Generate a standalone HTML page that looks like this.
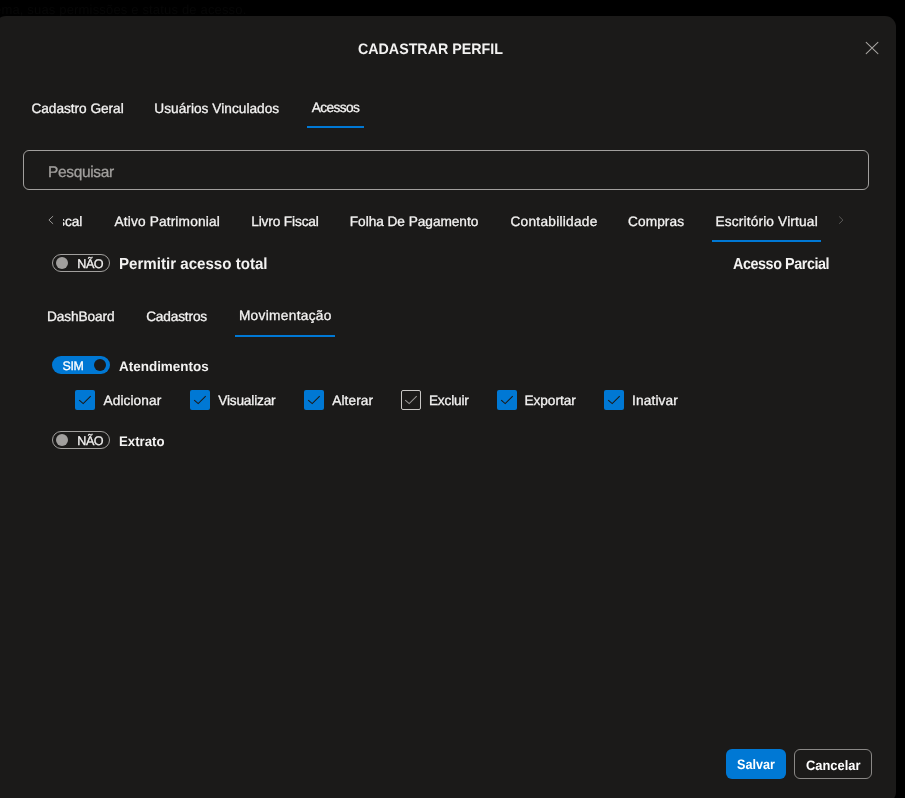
<!DOCTYPE html>
<html lang="pt-BR">
<head>
<meta charset="utf-8">
<title>Cadastrar Perfil</title>
<style>
*{box-sizing:border-box;margin:0;padding:0}
html,body{width:905px;height:798px;overflow:hidden;background:#000}
body{position:relative;font-family:"Liberation Sans",sans-serif;color:#f3f2f1;-webkit-font-smoothing:antialiased;text-rendering:geometricPrecision}
.bgtext{position:absolute;left:-6px;top:0px;font-size:13px;line-height:20px;color:#070707;white-space:nowrap;letter-spacing:0.17px}
.modal{position:absolute;left:-5px;top:16px;width:901px;height:787px;background:#1b1a19;border-radius:11px}
.t{position:absolute;white-space:nowrap;line-height:20px;font-size:13.7px;color:#f3f2f1;-webkit-text-stroke:0.3px currentColor}
.sb{-webkit-text-stroke:0;font-weight:700}
.ul{position:absolute;height:2px;background:#0078d4}
.search{position:absolute;left:23px;top:150px;width:846px;height:40px;border:1px solid #a19f9d;border-radius:6px}
.tog{position:absolute;width:58px;height:18px;border-radius:9px}
.tog.off{border:1px solid #a19f9d}
.tog.on{background:#0078d4}
.knob{position:absolute;width:12px;height:12px;border-radius:50%}
.cb{position:absolute;width:20px;height:20px;border-radius:2px;background:#0078d4}
.cb.un{background:transparent;border:1px solid #c8c6c4}
.cb svg{position:absolute;left:0;top:0}
.btn{position:absolute;top:749px;height:30px;border-radius:6px}
</style>
</head>
<body>
<div id="root" style="position:absolute;left:0;top:0;width:905px;height:798px;will-change:transform">
<div class="bgtext" id="bgt">ema, suas permissões e status de acesso.</div>
<div class="modal"></div>

<div class="t sb" id="title" style="left:357.5px;top:40px;font-size:15.2px;transform-origin:0 0;transform:scaleX(0.9381)">CADASTRAR PERFIL</div>
<svg style="position:absolute;left:862px;top:38px" width="20" height="20" viewBox="0 0 20 20"><path d="M4.2 4.4 L15.9 15.7 M15.9 4.4 L4.2 15.7" stroke="#a8a5a2" stroke-width="1.05" fill="none" stroke-linecap="round"/></svg>

<div class="t" id="tab1" style="left:31.45px;top:99px;letter-spacing:-0.04px">Cadastro Geral</div>
<div class="t" id="tab2" style="left:154.3px;top:99px;letter-spacing:0.02px">Usuários Vinculados</div>
<div class="t" id="tab3" style="left:311.85px;top:98px;letter-spacing:-0.61px">Acessos</div>
<div class="ul" style="left:307px;top:126px;width:57px"></div>

<div class="search"></div>
<div class="t" id="ph" style="left:48px;top:163px;font-size:15.5px;color:#a19f9d;letter-spacing:-0.34px">Pesquisar</div>

<svg style="position:absolute;left:46px;top:214px" width="12" height="12" viewBox="0 0 12 12"><path d="M7.1 2.1 L2.9 6 L7.1 9.9" stroke="#979593" stroke-width="1" fill="none"/></svg>
<div style="position:absolute;left:63px;top:205px;width:30px;height:30px;overflow:hidden"><div class="t" id="m0" style="right:10.6px;top:7px">Fiscal</div></div>
<div class="t" id="m1" style="left:114.45px;top:212px;letter-spacing:0.16px">Ativo Patrimonial</div>
<div class="t" id="m2" style="left:251.2px;top:212px;letter-spacing:-0.14px">Livro Fiscal</div>
<div class="t" id="m3" style="left:349.8px;top:212px;letter-spacing:-0.05px">Folha De Pagamento</div>
<div class="t" id="m4" style="left:510.45px;top:212px;letter-spacing:0.26px">Contabilidade</div>
<div class="t" id="m5" style="left:628px;top:212px;letter-spacing:0.08px">Compras</div>
<div class="t" id="m6" style="left:715.4px;top:212px;letter-spacing:0.17px">Escritório Virtual</div>
<div class="ul" style="left:712px;top:240px;width:109px"></div>
<svg style="position:absolute;left:835px;top:214px" width="12" height="12" viewBox="0 0 12 12"><path d="M4.2 2.5 L7.9 6.1 L4.2 9.7" stroke="#5c5a58" stroke-width="1" fill="none"/></svg>

<div class="tog off" style="left:52px;top:254px"><div class="knob" style="left:3px;top:2px;background:#a19f9d"></div></div>
<div class="t" id="nao1" style="left:77.35px;top:254px;font-size:12.6px;letter-spacing:-0.54px">NÃO</div>
<div class="t sb" id="perm" style="left:118.6px;top:255px;font-size:16px;transform-origin:0 0;transform:scaleX(0.9437)">Permitir acesso total</div>
<div class="t sb" id="parc" style="left:733px;top:255px;font-size:16px;letter-spacing:-0.48px;transform-origin:0 0;transform:scaleX(0.8970)">Acesso Parcial</div>

<div class="t" id="s1" style="left:46.9px;top:307px;letter-spacing:-0.11px">DashBoard</div>
<div class="t" id="s2" style="left:146.15px;top:307px;letter-spacing:-0.17px">Cadastros</div>
<div class="t" id="s3" style="left:238.9px;top:306px;letter-spacing:0.32px">Movimentação</div>
<div class="ul" style="left:235px;top:335px;width:100px"></div>

<div class="tog on" style="left:52px;top:356px"><div class="knob" style="left:42px;top:3px;background:#1b1a19"></div></div>
<div class="t" id="sim" style="left:62.45px;top:356px;font-size:12.4px;color:#fff;letter-spacing:-0.31px">SIM</div>
<div class="t sb" id="atend" style="left:118.5px;top:357px;font-size:13.7px;transform-origin:0 0;transform:scaleX(0.9834)">Atendimentos</div>

<div class="cb" style="left:75px;top:390px"><svg width="20" height="20"><path d="M4.2 10.2 L8.2 13.6 L15.7 6.2" stroke="#1b1a19" stroke-width="1.1" fill="none"/></svg></div>
<div class="t" id="c1" style="left:103.55px;top:391px;letter-spacing:0.08px">Adicionar</div>
<div class="cb" style="left:190px;top:390px"><svg width="20" height="20"><path d="M4.2 10.2 L8.2 13.6 L15.7 6.2" stroke="#1b1a19" stroke-width="1.1" fill="none"/></svg></div>
<div class="t" id="c2" style="left:218.25px;top:391px;letter-spacing:-0.19px">Visualizar</div>
<div class="cb" style="left:304px;top:390px"><svg width="20" height="20"><path d="M4.2 10.2 L8.2 13.6 L15.7 6.2" stroke="#1b1a19" stroke-width="1.1" fill="none"/></svg></div>
<div class="t" id="c3" style="left:332.25px;top:391px;letter-spacing:0.09px">Alterar</div>
<div class="cb un" style="left:401px;top:390px"><svg width="20" height="20" style="left:-1px;top:-1px"><path d="M4.2 10.2 L8.2 13.6 L15.7 6.2" stroke="#979593" stroke-width="1.1" fill="none"/></svg></div>
<div class="t" id="c4" style="left:428.9px;top:391px;letter-spacing:-0.19px">Excluir</div>
<div class="cb" style="left:497px;top:390px"><svg width="20" height="20"><path d="M4.2 10.2 L8.2 13.6 L15.7 6.2" stroke="#1b1a19" stroke-width="1.1" fill="none"/></svg></div>
<div class="t" id="c5" style="left:524.4px;top:391px;letter-spacing:-0.04px">Exportar</div>
<div class="cb" style="left:604px;top:390px"><svg width="20" height="20"><path d="M4.2 10.2 L8.2 13.6 L15.7 6.2" stroke="#1b1a19" stroke-width="1.1" fill="none"/></svg></div>
<div class="t" id="c6" style="left:632.05px;top:391px;letter-spacing:0.14px">Inativar</div>

<div class="tog off" style="left:52px;top:431px"><div class="knob" style="left:3px;top:2px;background:#a19f9d"></div></div>
<div class="t" id="nao2" style="left:77.3px;top:431px;font-size:12.6px;letter-spacing:-0.5px">NÃO</div>
<div class="t sb" id="extr" style="left:118.6px;top:432px;font-size:13.7px;transform-origin:0 0;transform:scaleX(0.9661)">Extrato</div>

<div class="btn" style="left:726px;width:60px;background:#0078d4"></div>
<div class="t sb" id="salvar" style="left:736.5px;top:754.5px;color:#fff;font-size:13.7px;transform-origin:0 0;transform:scaleX(0.9235)">Salvar</div>
<div class="btn" style="left:794px;width:78px;border:1px solid #8a8886"></div>
<div class="t sb" id="cancelar" style="left:805.6px;top:755.5px;color:#fff;font-size:13.7px;transform-origin:0 0;transform:scaleX(0.9415)">Cancelar</div>
</div>
</body>
</html>
